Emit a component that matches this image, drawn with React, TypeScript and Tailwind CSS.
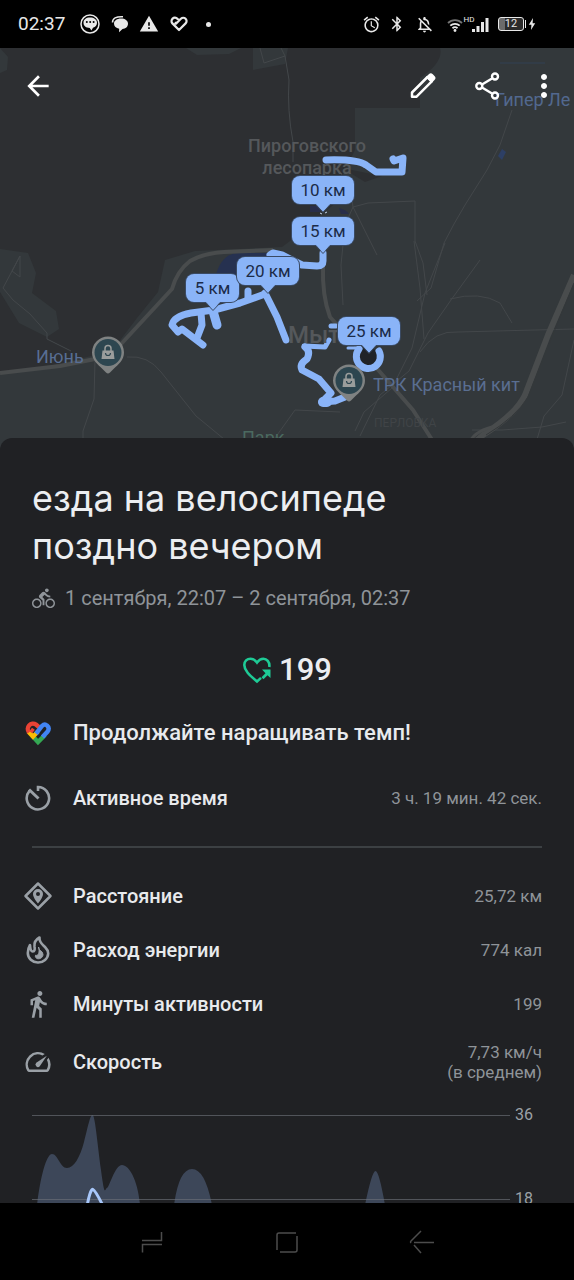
import type { ReactNode } from "react";
import {
  MdAlarm,
  MdArrowBack,
  MdBluetooth,
  MdDirectionsBike,
  MdDirectionsWalk,
  MdMoreVert,
  MdOutlineNotificationsOff,
  MdOutlineSpeed,
  MdWarning,
} from "react-icons/md";

function StatusBar() {
  return (
    <header className="flex h-12 shrink-0 items-center justify-between bg-black pl-[18px] pr-[38px] text-[#e8e8e8]">
      <div className="flex items-center">
        <time className="text-[19px] leading-6">02:37</time>
        <svg viewBox="0 0 20 20" className="ml-[15px] size-5" aria-hidden="true">
          <circle cx="10" cy="10" r="9" fill="none" stroke="currentColor" strokeWidth="1.5" />
          <path d="M10 3.6c4 0 7 2 7 5.200 0 2.600-1.700 4.200-4 4.900l-1.600 2.800-1.600-2.500C6 14 3.500 12 3.500 8.800 3.500 5.600 6 3.600 10 3.600z" fill="currentColor" />
          <g fill="#000">
            <circle cx="6.800" cy="8" r="1" />
            <circle cx="10.200" cy="8" r="1" />
            <circle cx="13.600" cy="8" r="1" />
          </g>
        </svg>
        <svg viewBox="0 0 18 18" className="ml-[11px] size-[18px]" aria-hidden="true">
          <path d="M10 3.500c4 0 7 2 7 5.200 0 3-2.500 5-5.500 5.200L8 17.200l.2-3.500C5 13 3 11.400 3 8.700c0-3 3-5.200 7-5.200z" fill="currentColor" />
          <path d="M1.500 7.500C1.500 3.500 5 1.300 12 1.700" fill="none" stroke="currentColor" strokeWidth="1.500" />
        </svg>
        <MdWarning className="ml-2.5 size-5" />
        <svg viewBox="0 0 18 16" className="ml-[11px] h-4 w-[18px]" fill="none" stroke="currentColor" strokeWidth="2.200" strokeLinejoin="round" aria-hidden="true">
          <path d="M9 4.200L7.400 2.800A3.300 3.300 0 0 0 2.400 7.400L9 14l6.600-6.600a3.300 3.300 0 0 0-4.700-4.700L6 7.600 4.800 6.400" />
        </svg>
        <span className="ml-[18px] size-[5px] rounded-full bg-current" />
      </div>
      <div className="flex items-center">
        <MdAlarm className="size-[19px]" />
        <MdBluetooth className="ml-[7px] size-[18px]" />
        <MdOutlineNotificationsOff className="ml-[9px] size-[19px]" />
        <svg viewBox="0 0 46 20" className="ml-[13px] h-5 w-[46px]" aria-hidden="true">
          <g fill="none" stroke="currentColor" strokeWidth="1.800">
            <path d="M1 9a10 10 0 0 1 14 0" opacity=".5" />
            <path d="M3.300 11.700a6.800 6.800 0 0 1 9.400 0" />
            <path d="M5.500 14.200a3.800 3.800 0 0 1 5 0" />
          </g>
          <circle cx="8" cy="16.500" r="1.400" fill="currentColor" />
          <text x="16.500" y="8" fontSize="8" fill="currentColor">HD</text>
          <g fill="currentColor">
            <rect x="25" y="15" width="3" height="3" />
            <rect x="29.500" y="12" width="3" height="6" />
            <rect x="34" y="8" width="3" height="10" />
            <rect x="38.500" y="4" width="3" height="14" />
          </g>
        </svg>
        <span className="ml-[5px] flex h-3.5 w-[26px] items-center justify-center rounded-[3px] border border-current bg-linear-to-r from-[#6b6b6b] from-25% to-[#2b2b2b] to-25% text-[11px] leading-3">
          12
        </span>
        <span className="ml-px h-2 w-px bg-current" />
        <svg viewBox="0 0 8 14" className="ml-0.5 h-3.5 w-2" fill="currentColor" aria-hidden="true">
          <path d="M5 1L.8 7.800h2.600L3 13l4.200-6.800H4.600z" />
        </svg>
      </div>
    </header>
  );
}

function MapDrawing() {
  return (
    <svg viewBox="0 48 574 402" preserveAspectRatio="xMidYMin slice" className="absolute inset-0 size-full" aria-hidden="true">
      <rect y="48" width="574" height="402" fill="#33383b" />
      <path d="M0 48H440Q444 62 420 78V108H355V150L343 174 347 196Q325 209 302 232L282 247 195 251 165 260 158 292 137 318 112 351 58 364 0 374Z" fill="#2d2f32" />
      <path d="M0 249l28 4 8 20-4 20 24 18 3 18-12 8-28-14L0 292zM186 48h55l-12 6-32 1zM253 48h35l-3 16-32 6zM0 48l8 9-1 13-7 3z" fill="#33383b" />
      <path d="M382 176l-17 6-23-14z" fill="#2d2f32" />
      <path d="M215 278q6-25 24-25h28v18z" fill="#263150" />
      <path d="M310 206h10v6h-10zM339 208q8 2 10 6h-8z" fill="#292e4a" />
      <path d="M498 156l4-7 4 3-4 8z" fill="#2d3f65" />
      <path d="M500 63h45M552 92v8" stroke="#334155" fill="none" />

      <g fill="none" strokeLinejoin="round">
        <g stroke="#43474a" strokeWidth="1">
          <path d="M260 48l4 15 21-7-4-8M285 56l4 24q-2 30 4 62v20" />
          <path d="M20 256L3 288l10 12 17 14 17 19v6l24 12M20 256l-8 15 8 6z" />
          <path d="M127 357q21-2 34 15l35 44 34 28M95 361l-1 38-11 32v10" />
          <path d="M341 173q12 24 12 34l-8 18-4 40 2 40M353 207l15-4 47-2v40l8 22 4 32M353 207l14 28 10 20" />
          <path d="M512 110l-12 35-13 25-22 35-11 19-10 19-13 45-14 13M480 260l-29 40-23 33-19 38-29 24-20 41" />
          <path d="M445 243l-20 50-13 55-20 40-28 24-9 19M414 241l6 47 4 51" />
          <path d="M420 352q15-22 38-20l116-3M450 299q30-8 50 4l12 20" />
          <path d="M574 340l-12 55-18 21-9 30M275 438l20-28 45 2M472 430h30l40-3 24-5" />
        </g>
        <g stroke="#494c4d" strokeWidth="4">
          <path d="M0 373l60-7 50-10 62-67q5-18 18-28 14-8 34-9l49-2" />
          <path d="M323 265q-1 31 7 52l50 55 33 38 23 36" />
          <path d="M574 275l-26 60-23 60q-9 19-42 40l-15 13" strokeWidth="6" />
          <path d="M469 444q4-12 23-17" strokeWidth="3" />
        </g>
        <path d="M574 283l-25 61-21 53q-12 20-42 38" stroke="#34383a" strokeWidth="1" />
      </g>

      <circle cx="368" cy="357" r="10" fill="#202328" />
      <g fill="none" stroke="#8ab4f8" strokeWidth="7" strokeLinejoin="round" strokeLinecap="round">
        <path d="M326 160q31-1 40 5l10 7h26l1-14-9 3-1-2" />
        <path d="M323 253v8q0 5-6 5l-15-1-20-10-9-2-3 2" />
        <path d="M265 294l-25 9-26 7-23 3q-17 3-19 12l6 7 4-3 21 16" />
        <path d="M201 313l1 12-5 13" />
        <path d="M213 311l4 14" strokeWidth="9" />
        <path d="M248 291v8M265 293l12 24 9 23" />
        <path d="M304 346l21 1 4-7" strokeWidth="5" />
        <path d="M305 347q6 4 2 12-8 5-5 11l17 9 12 14-9 9 13-1 10-4" />
        <path d="M331 326h5" strokeWidth="5" />
        <path d="M323 402h4" strokeWidth="10" />
        <path d="M348 348h9" strokeWidth="3" />
        <path d="M359 349a12 12 0 1 0 20 2" />
      </g>
      <path d="M320 213l2 1M325 213l2-1" stroke="#c6d8f0" />
    </svg>
  );
}

function KmMarker({ children, place }: { children: ReactNode; place: string }) {
  return (
    <div className={`absolute ${place}`}>
      <span className="flex h-7 items-center justify-center rounded-lg bg-[#8ab4f8] text-[17px] leading-5 text-[#1b2b48] ring-1 ring-[#3a4a63]">
        {children}
      </span>
      <svg viewBox="0 0 18 11" className="absolute top-[27px] left-1/2 h-[11px] w-[18px] -translate-x-1/2" aria-hidden="true">
        <path d="M1 0h16L9 9z" fill="#8ab4f8" />
        <path d="M1 1l8 8.500L17 1" fill="none" stroke="#3a4a63" />
      </svg>
    </div>
  );
}

function ShopPin({ place }: { place: string }) {
  return (
    <svg viewBox="0 0 34 38" className={`absolute h-[38px] w-[34px] ${place}`} aria-hidden="true">
      <path d="M17 .5A16 16 0 0 1 33 16.500c0 8-6 12-10 16l-4 4q-2 1.800-4 0l-4-4C7 28.500 1 24.500 1 16.500A16 16 0 0 1 17 .5z" fill="#7f8282" />
      <circle cx="17" cy="16.500" r="13.500" fill="#2d4650" />
      <path d="M11.500 14.500h11l1 8.500h-13z" fill="#9a9d9c" />
      <path d="M14 15v-2.500a3 3 0 0 1 6 0V15" fill="none" stroke="#9a9d9c" strokeWidth="1.500" />
      <path d="M14.500 17a2.500 2.500 0 0 0 5 0" fill="none" stroke="#2d4650" strokeWidth="1.200" />
    </svg>
  );
}

function RouteMap() {
  return (
    <section className="relative h-[402px] shrink-0 overflow-hidden" aria-label="Карта маршрута">
      <MapDrawing />
      <p className="absolute top-[87px] left-[307px] -translate-x-1/2 text-center text-lg leading-[22px] font-medium text-[#55585b]">
        Пироговского
        <br />
        лесопарка
      </p>
      <p className="absolute top-[273px] left-[288px] text-2xl leading-7 font-medium text-[#55585b]">Мыт</p>
      <p className="absolute top-[41px] left-[495px] text-lg leading-[22px] whitespace-nowrap text-[#52688f]">Гипер Ле</p>
      <p className="absolute top-[298px] left-9 text-lg leading-[22px] text-[#586e94]">Июнь</p>
      <p className="absolute top-[326px] left-[373px] text-lg leading-[22px] whitespace-nowrap text-[#5a6e91]">ТРК Красный кит</p>
      <p className="absolute top-[379px] left-[242px] text-lg leading-[22px] text-[#4b6a60]">Парк</p>
      <p className="absolute top-[367px] left-[374px] text-xs leading-4 text-[#404447]">ПЕРЛОВКА</p>
      <ShopPin place="top-[288px] left-[91px]" />
      <ShopPin place="top-[316px] left-[332px]" />
      <KmMarker place="top-[128px] left-[292px] w-[62px]">10 км</KmMarker>
      <KmMarker place="top-[169px] left-[292px] w-[62px]">15 км</KmMarker>
      <KmMarker place="top-[226px] left-[186px] w-[53px]">5 км</KmMarker>
      <KmMarker place="top-[209px] left-[237px] w-[62px]">20 км</KmMarker>
      <KmMarker place="top-[269px] left-[338px] w-[62px]">25 км</KmMarker>

      <nav className="relative flex items-center justify-between px-3.5 pt-3.5 text-white">
        <button type="button" aria-label="Назад" className="flex size-12 items-center justify-center">
          <MdArrowBack className="size-8" />
        </button>
        <div className="flex items-center">
          <button type="button" aria-label="Изменить" className="flex size-12 items-center justify-center">
            <svg viewBox="0 0 28 28" className="size-7" aria-hidden="true">
              <path d="M3 24.800v-4.300L18.500 5l4.300 4.300L7.300 24.800z" fill="none" stroke="currentColor" strokeWidth="2.500" strokeLinejoin="round" />
              <path d="M16.800 5.200l3-3q2-1.700 4 0l1.700 1.700q2 2 0 4l-3 3z" fill="currentColor" />
            </svg>
          </button>
          <button type="button" aria-label="Поделиться" className="ml-[17px] flex size-12 items-center justify-center">
            <svg viewBox="0 0 28 28" className="size-7" fill="none" stroke="currentColor" strokeWidth="2.400" aria-hidden="true">
              <path d="M8 12.500l10-6M8 15.500l10 6" />
              <circle cx="5.300" cy="14" r="3" />
              <circle cx="21" cy="4.500" r="3" />
              <circle cx="21" cy="23.500" r="3" />
            </svg>
          </button>
          <button type="button" aria-label="Ещё" className="ml-2 -mr-2 flex size-12 items-center justify-center">
            <MdMoreVert className="size-9" />
          </button>
        </div>
      </nav>
    </section>
  );
}

function FitHeart() {
  return (
    <svg viewBox="0 0 28 26" className="h-[26px] w-7" fill="none" strokeWidth="4.400" aria-hidden="true">
      <path d="M8 15.500L14 22l7-7" stroke="#34a853" />
      <path d="M4.200 11.500L9 16.500l5-5" stroke="#fbbc04" />
      <path d="M9.500 11.500L6.700 9.500M5 12.300A5.300 5.300 0 0 1 12 4.500l3 2.700" stroke="#ea4335" />
      <path d="M12 13.600L18 6q2.600-2.700 5-.5 3 2.500.6 6L18.500 17" stroke="#4285f4" />
    </svg>
  );
}

function CardioHeart() {
  return (
    <svg viewBox="0 0 30 28" className="h-7 w-[30px]" aria-hidden="true">
      <path d="M27.300 11C28 5.500 24.500 2.700 21.400 2.700c-3 0-4.800 1.600-6.400 3.800-1.600-2.200-3.400-3.800-6.400-3.800C5 2.700 2.300 5.200 2.300 9c0 6 6 10.700 12.700 16.500l4-3.600" fill="none" stroke="#1ecb96" strokeWidth="2.600" />
      <path d="M20 13.500h8.500V22l-3-2.700-4 4-2-2 4-4z" fill="#1ecb96" />
    </svg>
  );
}

function TimerIcon() {
  return (
    <svg viewBox="0 0 28 28" className="size-7" fill="none" stroke="currentColor" strokeWidth="2.600" aria-hidden="true">
      <path d="M14 7V3a11.200 11.200 0 1 1-8.500 3.800" />
      <path d="M5 5.500l9.500 9" strokeWidth="3" />
    </svg>
  );
}

function DistanceIcon() {
  return (
    <svg viewBox="0 0 30 30" className="size-[30px]" aria-hidden="true">
      <path d="M15 2.500L27.500 15 15 27.500 2.500 15z" fill="none" stroke="currentColor" strokeWidth="2.500" strokeLinejoin="round" />
      <path fillRule="evenodd" d="M15 8a5 5 0 0 0-5 5c0 3.700 5 9.500 5 9.500s5-5.800 5-9.500a5 5 0 0 0-5-5zm0 3a2 2 0 1 1 0 4 2 2 0 0 1 0-4z" fill="currentColor" />
    </svg>
  );
}

function FlameIcon() {
  return (
    <svg viewBox="0 0 26 30" className="h-[30px] w-[26px]" fill="none" stroke="currentColor" strokeWidth="2.600" strokeLinejoin="round" aria-hidden="true">
      <path d="M14.500 2.500c-.5 5 3 7 5.500 9.500 2.300 2.300 3.200 4.200 3.200 6.500A10 9.500 0 0 1 13 27.500 10 9.500 0 0 1 2.800 18c0-3 .7-5.500 2.200-8 .2 3 .5 6.500 2.700 6.500S10 14 9.500 11.500C9 8 11 4.500 14.500 2.500z" />
      <path d="M13.500 12c0 4 4.500 3.500 4.500 7.500 0 3.500-4 5-6 4-1.500-.8-2-2-1.500-3.200 3 .7 4.500-3 3-8.300z" fill="currentColor" strokeWidth="1" />
    </svg>
  );
}

function MetricRow({ icon, label, children, height = "h-[54px]" }: { icon: ReactNode; label: string; children: ReactNode; height?: string }) {
  return (
    <div className={`flex items-center ${height}`}>
      <span className="flex w-[30px] shrink-0 items-center justify-center text-[#9aa0a6]">{icon}</span>
      <dt className="ml-5 text-xl leading-6 font-medium text-[#e8eaed]">{label}</dt>
      <dd className="ml-auto text-right text-[17px] leading-5 text-[#8f9499]">{children}</dd>
    </div>
  );
}

function SpeedChart() {
  return (
    <div className="mt-3 flex pl-8">
      <svg viewBox="32 1105 478 120" preserveAspectRatio="none" className="h-[120px] min-w-0 flex-1" role="img" aria-label="График скорости">
        <path d="M37 1205C40 1180 46 1154 52 1154S60 1168 67 1168 80 1157 84 1142 90 1115 92.500 1115 97 1140 101 1170 105 1188 107 1188 115 1165 122 1165 138 1180 140 1205V1225H37ZM174 1205Q179 1169 192 1169T212 1205V1225H174ZM365 1205Q372 1171 375.500 1171T385 1205V1225H365Z" fill="#3d4759" />
        <path d="M32 1115.500H510M32 1199.500H510" stroke="#6b7078" strokeOpacity=".65" strokeWidth="1" />
        <path d="M86 1212Q90 1188 93 1189.500T106 1212" fill="none" stroke="#a8c7fa" strokeWidth="3" />
      </svg>
      <div className="flex w-16 flex-col gap-16 pl-[5px] text-base leading-5 text-[#9aa0a6]">
        <span>36</span>
        <span>18</span>
      </div>
    </div>
  );
}

function WorkoutSheet() {
  return (
    <main className="relative -mt-3 min-h-0 flex-1 overflow-hidden rounded-t-xl bg-[#202124] pt-9">
      <div className="px-8">
        <h1 className="font-['Inter','Roboto',sans-serif] text-[36px] leading-12 text-[#eceef1]">
          езда на велосипеде
          <br />
          поздно вечером
        </h1>
        <p className="mt-4 flex items-center text-xl leading-6 text-[#8f9499]">
          <MdDirectionsBike className="mr-2.5 size-[23px]" />
          1 сентября, 22:07 – 2 сентября, 02:37
        </p>
        <p className="mt-10 flex h-10 items-center justify-center gap-[7px] text-[31px] leading-10 font-medium text-[#eceef1]">
          <CardioHeart />
          199
        </p>
      </div>
      <div className="mt-[23px] flex h-10 items-center pl-6">
        <FitHeart />
        <p className="ml-[21px] text-[22px] leading-7 font-medium text-[#e8eaed]">Продолжайте наращивать темп!</p>
      </div>
      <dl className="mt-[18px] pr-8 pl-[23px]">
        <MetricRow icon={<TimerIcon />} label="Активное время">3 ч. 19 мин. 42 сек.</MetricRow>
      </dl>
      <hr className="mx-8 mt-[21px] border-t-2 border-[#3c4043]" />
      <dl className="mt-[21px] pr-8 pl-[23px]">
        <MetricRow icon={<DistanceIcon />} label="Расстояние">25,72 км</MetricRow>
        <MetricRow icon={<FlameIcon />} label="Расход энергии">774 кал</MetricRow>
        <MetricRow icon={<MdDirectionsWalk className="size-8" />} label="Минуты активности">199</MetricRow>
        <MetricRow icon={<MdOutlineSpeed className="size-8" />} label="Скорость" height="h-[62px]">
          7,73 км/ч
          <br />
          (в среднем)
        </MetricRow>
      </dl>
      <SpeedChart />
    </main>
  );
}

function SystemNav() {
  const icon = "h-7 w-7";
  const button = "flex size-12 items-center justify-center";
  return (
    <footer className="flex h-[77px] shrink-0 items-center justify-between bg-black px-32 text-[#4c4c4c]">
      <button type="button" aria-label="Недавние приложения" className={button}>
        <svg viewBox="0 0 28 28" className={icon} fill="none" stroke="currentColor" strokeWidth="1.500" aria-hidden="true">
          <path d="M4 12.500h19.500V4M4.500 24.500V16.500H24" />
        </svg>
      </button>
      <button type="button" aria-label="Домой" className={button}>
        <svg viewBox="0 0 28 28" className={icon} fill="none" stroke="currentColor" strokeWidth="1.500" aria-hidden="true">
          <path d="M4 22V7q0-2 2-2h17M24 8v14q0 2-2 2H7" />
        </svg>
      </button>
      <button type="button" aria-label="Назад" className={button}>
        <svg viewBox="0 0 28 28" className={icon} fill="none" stroke="currentColor" strokeWidth="1.500" aria-hidden="true">
          <path d="M13 3L3 13q-1 1 0 2M6 17l7 8M6 14.500h20" />
        </svg>
      </button>
    </footer>
  );
}

export default function App() {
  return (
    <div className="flex h-screen flex-col overflow-hidden bg-[#202124] font-['Roboto','Noto_Sans',sans-serif]">
      <StatusBar />
      <RouteMap />
      <WorkoutSheet />
      <SystemNav />
    </div>
  );
}
